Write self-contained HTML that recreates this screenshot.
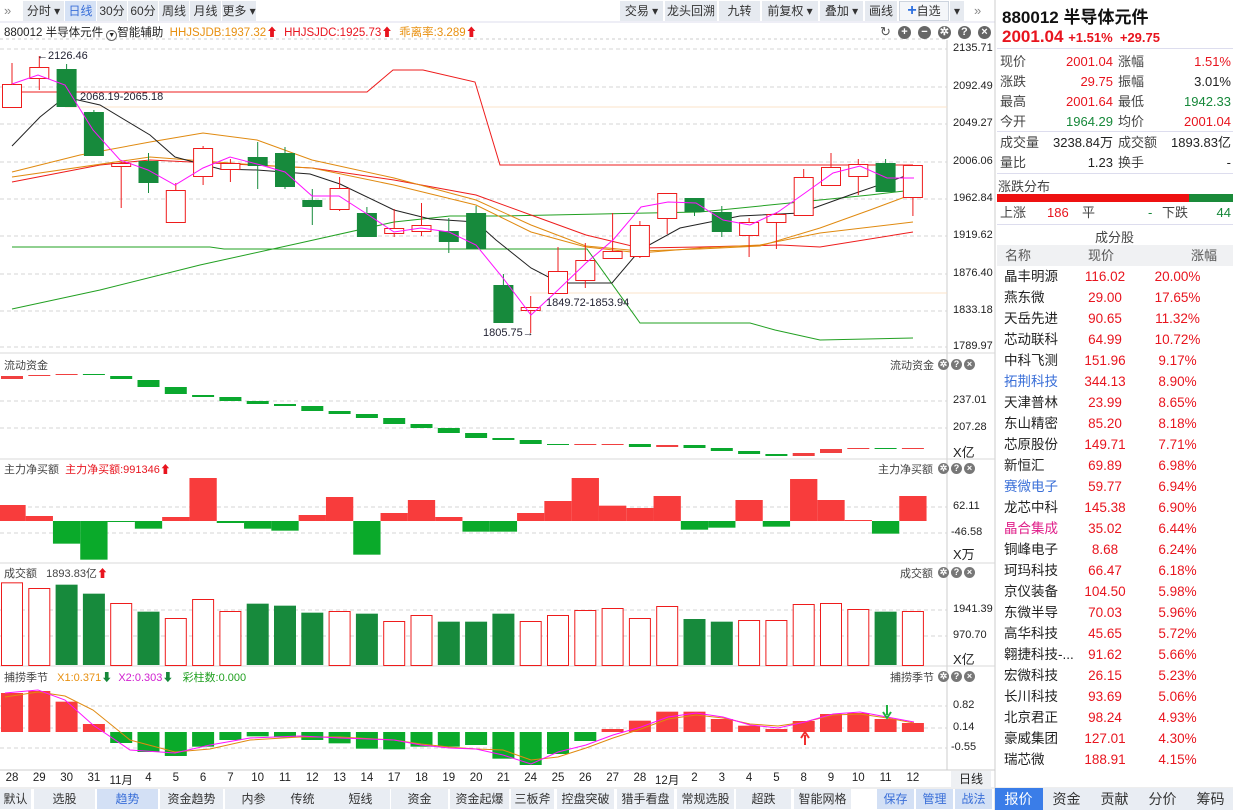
<!DOCTYPE html>
<html><head><meta charset="utf-8"><style>
*{margin:0;padding:0;box-sizing:border-box}
body{width:1233px;height:810px;overflow:hidden;background:#fff;font-family:"Liberation Sans","Noto Sans CJK SC",sans-serif;font-size:12px;color:#222;position:relative}
.a{position:absolute;white-space:nowrap}
.btn{position:absolute;top:1px;height:20px;background:#e6eaf0;line-height:20px;text-align:center;font-size:12px;color:#333}
.r{color:#e8141e}.g{color:#16883a}.b{color:#3a6fd8}
.rl{position:absolute;left:1000px;width:233px;height:20px;line-height:20px;font-size:13px}
.rl span{position:absolute}
.tb{position:absolute;top:789px;height:20px;line-height:20px;text-align:center;font-size:12px;color:#333;background:#e9edf3}
.ic{display:inline-block;width:11px;height:11px;border-radius:50%;background:#777;color:#fff;font-size:9px;line-height:11px;text-align:center;font-weight:bold;margin-right:2px;vertical-align:middle}
.ic2{display:inline-block;width:13px;height:13px;border-radius:50%;background:#666;color:#fff;font-size:11px;line-height:13px;text-align:center;font-weight:bold;margin-right:7px;vertical-align:middle}
</style></head><body>
<svg id="s" class="a" style="left:0;top:0" width="1233" height="810"></svg>
<div class="a" style="left:4px;top:3px;color:#888;font-size:13px">»</div>
<div class="btn" style="left:23px;width:41px">分时 ▾</div>
<div class="btn" style="left:65px;width:31px;background:#d6e2f5;color:#3a6fd8">日线</div>
<div class="btn" style="left:97px;width:30px">30分</div>
<div class="btn" style="left:128px;width:30px">60分</div>
<div class="btn" style="left:159px;width:30px">周线</div>
<div class="btn" style="left:190px;width:31px">月线</div>
<div class="btn" style="left:222px;width:34px">更多 ▾</div>
<div class="btn" style="left:620px;width:43px">交易 ▾</div>
<div class="btn" style="left:665px;width:52px">龙头回溯</div>
<div class="btn" style="left:719px;width:41px">九转</div>
<div class="btn" style="left:762px;width:56px">前复权 ▾</div>
<div class="btn" style="left:820px;width:43px">叠加 ▾</div>
<div class="btn" style="left:865px;width:32px">画线</div>
<div class="btn" style="left:899px;width:50px;background:#f4f6f9;border:1px solid #cdd4de;line-height:18px"><b style="color:#2c6fe0;font-size:16px">+</b>自选</div>
<div class="btn" style="left:950px;width:14px">▾</div>
<div class="a" style="left:974px;top:3px;color:#888;font-size:13px">»</div>
<div class="a" style="left:4px;top:24px;font-size:11.5px">880012 半导体元件 <span style="display:inline-block;width:11px;height:11px;border:1px solid #666;border-radius:50%;font-size:7px;line-height:9px;text-align:center;vertical-align:-1px">▼</span>智能辅助 <span style="color:#e89010">&nbsp;HHJSJDB:1937.32<span class="r">⬆</span></span> <span class="r">&nbsp;HHJSJDC:1925.73⬆</span> <span style="color:#e89010">&nbsp;乖离率:3.289</span><span class="r">⬆</span></div>
<div class="a" style="left:880px;top:24px;color:#555;font-size:13px"><span style="margin-right:7px">↻</span><span class="ic2">+</span><span class="ic2">−</span><span class="ic2">✲</span><span class="ic2">?</span><span class="ic2">×</span></div>
<div class="a" style="left:37px;top:50px;font-size:11px;color:#223">←2126.46</div>
<div class="a" style="left:80px;top:91px;font-size:11px;color:#223">2068.19-2065.18</div>
<div class="a" style="left:483px;top:327px;font-size:11px;color:#223">1805.75→</div>
<div class="a" style="left:546px;top:297px;font-size:11px;color:#223">1849.72-1853.94</div>
<div id="ax"></div>
<div class="a" style="left:4px;top:357px;font-size:11px;color:#444">流动资金</div>
<div class="a" style="left:890px;top:357px;font-size:11px;color:#444">流动资金</div>
<div class="a" style="left:4px;top:461px;font-size:11px;color:#444">主力净买额 &nbsp;<span class="r">主力净买额:991346⬆</span></div>
<div class="a" style="left:878px;top:461px;font-size:11px;color:#444">主力净买额</div>
<div class="a" style="left:4px;top:565px;font-size:11px;color:#444">成交额 &nbsp; 1893.83亿<span class="r">⬆</span></div>
<div class="a" style="left:900px;top:565px;font-size:11px;color:#444">成交额</div>
<div class="a" style="left:4px;top:669px;font-size:11px;color:#444">捕捞季节 &nbsp; <span style="color:#e89010">X1:0.371</span><span class="g">⬇</span> &nbsp;<span style="color:#d020d0">X2:0.303</span><span class="g">⬇</span> &nbsp; <span style="color:#20a020">彩柱数:0.000</span></div>
<div class="a" style="left:890px;top:669px;font-size:11px;color:#444">捕捞季节</div>
<div class="a" style="left:938px;top:357px"><span class="ic">✲</span><span class="ic">?</span><span class="ic">×</span></div>
<div class="a" style="left:938px;top:461px"><span class="ic">✲</span><span class="ic">?</span><span class="ic">×</span></div>
<div class="a" style="left:938px;top:565px"><span class="ic">✲</span><span class="ic">?</span><span class="ic">×</span></div>
<div class="a" style="left:938px;top:669px"><span class="ic">✲</span><span class="ic">?</span><span class="ic">×</span></div>
<div id="dates"></div>
<div class="a" style="left:951px;top:771px;width:40px;height:17px;background:#eef0f3;text-align:center;line-height:17px;font-size:12px">日线</div>
<div id="tb"></div>
<div class="a" style="left:1002px;top:3px;font-size:17px;font-weight:bold;color:#111">880012 半导体元件</div>
<div class="a" style="left:1002px;top:27px;font-size:17px;font-weight:bold" ><span class="r">2001.04</span> <span class="r" style="font-size:13px">+1.51% &nbsp;+29.75</span></div>
<div id="rp"></div>
<div class="a" style="left:998px;top:176px;font-size:13px;color:#444">涨跌分布</div>
<div class="a" style="left:997px;top:194px;width:192px;height:8px;background:#ee1111"></div>
<div class="a" style="left:1189px;top:194px;width:44px;height:8px;background:#1a8a3a"></div>
<div class="rl" style="top:203px"><span style="left:0;color:#444">上涨</span><span class="r" style="left:47px">186</span><span style="left:82px;color:#444">平</span><span class="g" style="left:148px">-</span><span style="left:162px;color:#444">下跌</span><span class="g" style="right:2px">44</span></div>
<div class="a" style="left:1095px;top:227px;font-size:13px;color:#444">成分股</div>
<div class="a" style="left:997px;top:245px;width:236px;height:21px;background:#f0f1f3"></div>
<div class="rl" style="top:246px;color:#555"><span style="left:5px">名称</span><span style="left:88px">现价</span><span style="left:191px">涨幅</span></div>
<div id="sl"></div>
<div id="rtabs"></div>
<script>
const NS="http://www.w3.org/2000/svg",S=document.getElementById('s');
function el(t,a){const e=document.createElementNS(NS,t);for(const k in a)e.setAttribute(k,a[k]);S.appendChild(e);return e}
function R(x,y,w,h,f,st){el('rect',{x,y,width:w,height:Math.max(h,1),fill:f||'none',stroke:st||'none','stroke-width':1})}
function L(x1,y1,x2,y2,c,d){el('line',{x1,y1,x2,y2,stroke:c,'stroke-width':1,'stroke-dasharray':d||''})}
function P(pts,c,w){el('polyline',{points:pts.map(p=>p.join(',')).join(' '),fill:'none',stroke:c,'stroke-width':w||1})}
const X=i=>12+i*27.3, RED='#ee1c1c',GR='#178a3c';
L(0,22,995,22,'#dde');L(0,39,947,39,'#ccc','3,3');
L(947,40,947,770,'#ccc');L(995,0,995,810,'#ccc');
[353,459,563,666].forEach(y=>L(0,y,995,y,'#d8d8d8'));
L(0,770,995,770,'#ccc');L(0,788,1233,788,'#ddd');
[49,87,124,162,199,236,274,311,347].forEach(y=>L(0,y,947,y,'#d6d6d6','4,3'));
[401,428,507,533,610,636,706,728,748].forEach(y=>L(0,y,947,y,'#d6d6d6','4,3'));
L(65,107,947,107,'#fbe3c8');L(530,293,947,293,'#fbe3c8');
P([[12,92],[367,92],[393,70],[423,70],[475,82],[500,165],[913,165]],RED);
P([[12,247],[210,247],[224,249],[587,249],[640,323],[750,323],[775,330],[820,340],[913,338]],'#22a022');
P([[12,309],[100,290],[200,265],[300,243],[394,222],[450,216],[500,216],[600,214],[700,212],[800,202],[870,195],[913,190]],'#22a022');
P([[12,182],[100,165],[150,160],[312,168],[394,180],[476,195],[531,215],[586,235],[640,248],[700,247],[780,245],[820,247],[913,232]],RED);
P([[12,172],[80,155],[150,142],[203,133],[257,140],[312,160],[394,178],[476,200],[531,225],[586,246],[640,251],[700,249],[760,246],[820,228],[870,210],[913,194]],'#e08a10');
P([[12,177],[150,157],[257,165],[312,168],[394,185],[476,205],[531,232],[586,247],[640,253],[700,248],[760,245],[820,233],[913,222]],'#e08a10');
P([[12,146],[40,117],[65,97],[100,105],[150,135],[175,157],[220,169],[257,170],[310,174],[340,184],[394,210],[430,219],[476,222],[496,240],[531,268],[560,283],[612,283],[640,250],[680,228],[740,216],[800,213],[850,195],[914,173]],'#222');
const C=[[84,107,63,108,1],[67,78,56,90,1],[69,107,64,107,0],[112,156,110,156,0],[163,166,162,208,1],[161,183,153,193,0],[190,222,183,222,1],[148,176,146,185,1],[163,169,159,182,1],[157,166,142,189,0],[153,187,147,189,0],[200,207,189,225,0],[188,209,177,211,1],[213,237,207,237,0],[228,233,209,237,1],[225,231,203,236,1],[231,242,218,253,0],[213,249,206,249,0],[285,323,274,323,0],[307,310,296,333,1],[271,293,247,293,1],[260,280,243,288,1],[251,258,213,258,1],[225,256,221,258,1],[193,218,193,234,1],[198,212,198,216,0],[212,232,206,237,0],[222,235,218,257,1],[214,222,213,249,1],[177,215,169,215,1],[167,185,153,185,1],[164,176,159,195,1],[163,192,159,192,0],[165,197,165,216,1]];
C.forEach((c,i)=>{const x=X(i);const col=c[4]?RED:GR;L(x,c[2],x,c[0],col);L(x,c[1],x,c[3],col);
 if(c[4])R(x-10+.5,c[0]+.5,19,c[1]-c[0],'#fff',RED);else R(x-10,c[0],20,c[1]-c[0],GR);});
P([[12,84],[38,75],[65,85],[93,130],[120,160],[148,170],[175,185],[203,168],[230,157],[257,164],[285,172],[312,196],[339,196],[367,214],[394,232],[421,228],[449,232],[476,245],[503,278],[531,315],[558,290],[586,263],[613,240],[641,207],[668,202],[696,203],[723,220],[750,225],[778,212],[805,193],[833,173],[860,166],[887,178],[914,178]],'#ff10ff');
const F=[[376,379,1],[375,376,1],[374,375,1],[374,375,0],[376,379,0],[380,387,0],[387,394,0],[395,397,0],[397,401,0],[401,404,0],[404,406,0],[406,411,0],[411,414,0],[414,418,0],[418,424,0],[424,428,0],[428,433,0],[433,438,0],[438,440,0],[440,444,0],[444,445,0],[444,445,1],[444,445,1],[444,447,0],[445,447,1],[445,448,0],[448,451,0],[451,454,0],[454,456,0],[453,456,1],[449,453,1],[448,449,1],[448,449,0],[448,449,1]];
F.forEach((f,i)=>R(X(i)-11,f[0],22,f[1]-f[0],f[2]?'#f04040':'#0aa82e'));
const N=[141,174,-257,-305,-191,-212,177,60,-195,-212,-218,171,117,-290,165,126,177,-221,-221,165,129,60,143,150,114,-215,-209,126,-206,63,126,186,-227,114];
N.forEach((v,i)=>{const y=Math.abs(v)/3+458,x=X(i)-13.65;if(v>0)R(x,y,27.3,521-y,'#f83c3c');else R(x,521,27.3,y-521,'#0aaa2a');});
const V=[[373,1],[390,1],[380,0],[407,0],[435,1],[461,0],[480,1],[423,1],[459,1],[437,0],[443,0],[464,0],[459,1],[467,0],[489,1],[471,1],[491,0],[491,0],[467,0],[489,1],[471,1],[456,1],[450,1],[480,1],[444,1],[483,0],[491,0],[486,1],[486,1],[438,1],[435,1],[453,1],[461,0],[459,1]];
V.forEach((v,i)=>{const y=v[0]/3+458,x=X(i)-11;if(v[1])R(x+.5,y+.5,21,665-y,'#fff',RED);else R(x,y,22,665-y,GR);});
const K=[87,81,113,180,-237,-264,-276,-248,-228,-217,-220,-228,-238,-254,-256,-248,-248,-243,-284,-303,-270,-231,195,170,143,143,165,185,195,171,150,147,165,177];
K.forEach((v,i)=>{const y=Math.abs(v)/3+664,x=X(i)-11;if(v>0)R(x,y,22,732-y,'#f83c3c');else R(x,732,22,y-732,'#0aaa2a');});
P([[5,697],[38,692],[65,696],[93,710],[130,740],[175,752],[210,749],[250,740],[300,737],[340,737],[394,740],[421,744],[449,747],[476,749],[503,750],[531,760],[558,757],[586,748],[613,738],[641,729],[668,719],[696,715],[723,718],[750,724],[778,726],[805,722],[833,715],[860,714],[887,718],[914,723]],'#e08a10');
P([[5,693],[38,690],[65,700],[93,725],[130,750],[175,753],[210,745],[250,738],[300,736],[340,738],[394,740],[421,745],[449,748],[476,749],[503,755],[531,764],[558,752],[586,745],[613,735],[641,727],[668,717],[696,713],[723,717],[750,725],[778,728],[805,722],[833,714],[860,712],[887,717],[914,722]],'#ff10ff');
el('path',{d:'M805,745 L805,735 M801,738 L805,732 L809,738',stroke:'#f03030','stroke-width':2,fill:'none'});
el('path',{d:'M887,705 L887,715 M883,712 L887,718 L891,712',stroke:'#20b040','stroke-width':2,fill:'none'});
R(995,788,238,22,'#e9edf3');R(995,788,48,22,'#3a7de8');
let h='';
[['2135.71',49],['2092.49',87],['2049.27',124],['2006.06',162],['1962.84',199],['1919.62',236],['1876.40',274],['1833.18',311],['1789.97',347],['237.01',401],['207.28',428],['X亿',449],['62.11',507],['-46.58',533],['X万',551],['1941.39',610],['970.70',636],['X亿',656],['0.82',706],['0.14',728],['-0.55',748]].forEach(a=>{h+=`<div class="a" style="left:${a[0][0]=='-'?951:953}px;top:${a[1]-7}px;font-size:${a[0][0]=='X'?13:11}px;color:#222">${a[0]}</div>`});
document.getElementById('ax').innerHTML=h;
h='';['28','29','30','31','11月','4','5','6','7','10','11','12','13','14','17','18','19','20','21','24','25','26','27','28','12月','2','3','4','5','8','9','10','11','12'].forEach((d,i)=>{h+=`<div class="a" style="left:${X(i)-15}px;width:30px;text-align:center;top:772px;font-size:11.5px">${d}</div>`});
document.getElementById('dates').innerHTML=h;
h='';[['默认',0,32],['选股',34,62],['趋势',97,62,1],['资金趋势',160,64],['内参',225,58],['传统',274,58],['短线',331,60],['资金',391,58],['资金起爆',450,60],['三板斧',511,44],['控盘突破',557,58],['猎手看盘',617,58],['常规选股',677,58],['超跌',736,56],['智能网格',794,58]].forEach(t=>{h+=`<div class="tb" style="left:${t[1]}px;width:${t[2]-1}px;${t[3]?'background:#d3e0f5;color:#3a6fd8':''}">${t[0]}</div>`});
[['保存',877],['管理',916],['战法',955]].forEach(t=>{h+=`<div class="tb" style="left:${t[1]}px;width:37px;background:#d3e0f5;color:#3a6fd8">${t[0]}</div>`});
document.getElementById('tb').innerHTML=h;
h='';[['报价',995,1],['资金',1043],['贡献',1091],['分价',1139],['筹码',1187]].forEach(t=>{h+=`<div class="a" style="left:${t[1]}px;width:47px;top:789px;height:21px;line-height:21px;text-align:center;font-size:14px;color:${t[2]?'#fff':'#333'}">${t[0]}</div>`});
document.getElementById('rtabs').innerHTML=h;
h='';const rows=[['现价','2001.04','r','涨幅','1.51%','r',52],['涨跌','29.75','r','振幅','3.01%','',72],['最高','2001.64','r','最低','1942.33','g',92],['今开','1964.29','g','均价','2001.04','r',112],['成交量','3238.84万','','成交额','1893.83亿','',133],['量比','1.23','','换手','-','',153]];
rows.forEach(r=>{h+=`<div class="rl" style="top:${r[6]}px"><span style="left:0;color:#444">${r[0]}</span><span class="${r[2]}" style="right:120px">${r[1]}</span><span style="left:118px;color:#444">${r[3]}</span><span class="${r[5]}" style="right:2px">${r[4]}</span></div>`});
h+='<div class="a" style="left:997px;top:48px;width:236px;border-top:1px solid #dde"></div><div class="a" style="left:997px;top:131px;width:236px;border-top:1px solid #dde"></div><div class="a" style="left:997px;top:173px;width:236px;border-top:1px solid #dde"></div><div class="a" style="left:997px;top:224px;width:236px;border-top:1px solid #dde"></div>';
document.getElementById('rp').innerHTML=h;
h='';const st=[['晶丰明源','116.02','20.00%'],['燕东微','29.00','17.65%'],['天岳先进','90.65','11.32%'],['芯动联科','64.99','10.72%'],['中科飞测','151.96','9.17%'],['拓荆科技','344.13','8.90%','#3a6fd8'],['天津普林','23.99','8.65%'],['东山精密','85.20','8.18%'],['芯原股份','149.71','7.71%'],['新恒汇','69.89','6.98%'],['赛微电子','59.77','6.94%','#3a6fd8'],['龙芯中科','145.38','6.90%'],['晶合集成','35.02','6.44%','#e0208a'],['铜峰电子','8.68','6.24%'],['珂玛科技','66.47','6.18%'],['京仪装备','104.50','5.98%'],['东微半导','70.03','5.96%'],['高华科技','45.65','5.72%'],['翱捷科技-...','91.62','5.66%'],['宏微科技','26.15','5.23%'],['长川科技','93.69','5.06%'],['北京君正','98.24','4.93%'],['豪威集团','127.01','4.30%'],['瑞芯微','188.91','4.15%']];
st.forEach((s,i)=>{h+=`<div class="rl" style="top:${267+i*21}px;font-size:13.5px"><span style="left:4px;color:${s[3]||'#222'}">${s[0]}</span><span class="r" style="left:70px;width:70px;text-align:center">${s[1]}</span><span class="r" style="left:140px;width:75px;text-align:center">${s[2]}</span></div>`});
document.getElementById('sl').innerHTML=h;
</script>
</body></html>
